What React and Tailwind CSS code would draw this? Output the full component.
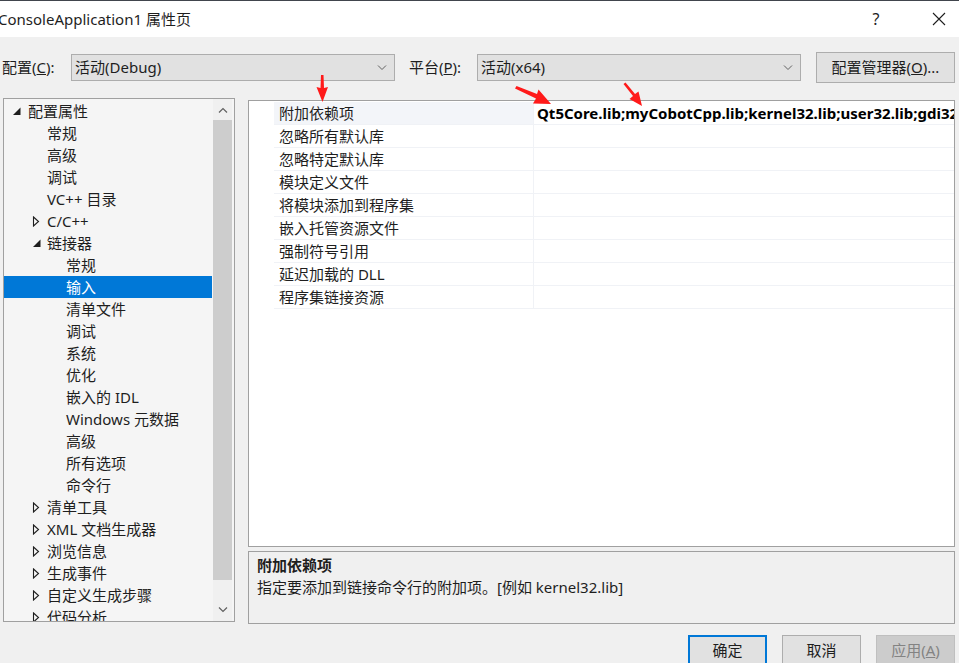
import React from "react";

const FONT = { fontFamily: '"Noto Sans", "Noto Sans CJK SC", sans-serif' };

const treeItems = [
  { t: "配置属性", l: 0, e: "open" },
  { t: "常规", l: 1 },
  { t: "高级", l: 1 },
  { t: "调试", l: 1 },
  { t: "VC++ 目录", l: 1 },
  { t: "C/C++", l: 1, e: "closed" },
  { t: "链接器", l: 1, e: "open" },
  { t: "常规", l: 2 },
  { t: "输入", l: 2, sel: true },
  { t: "清单文件", l: 2 },
  { t: "调试", l: 2 },
  { t: "系统", l: 2 },
  { t: "优化", l: 2 },
  { t: "嵌入的 IDL", l: 2 },
  { t: "Windows 元数据", l: 2 },
  { t: "高级", l: 2 },
  { t: "所有选项", l: 2 },
  { t: "命令行", l: 2 },
  { t: "清单工具", l: 1, e: "closed" },
  { t: "XML 文档生成器", l: 1, e: "closed" },
  { t: "浏览信息", l: 1, e: "closed" },
  { t: "生成事件", l: 1, e: "closed" },
  { t: "自定义生成步骤", l: 1, e: "closed" },
  { t: "代码分析", l: 1, e: "closed" },
];

const props = [
  "附加依赖项",
  "忽略所有默认库",
  "忽略特定默认库",
  "模块定义文件",
  "将模块添加到程序集",
  "嵌入托管资源文件",
  "强制符号引用",
  "延迟加载的 DLL",
  "程序集链接资源",
];

function Chevron() {
  return (
    <svg width="10" height="6" viewBox="0 0 10 6" className="shrink-0">
      <path d="M1 0.5 L5 4.5 L9 0.5" fill="none" stroke="#606060" strokeWidth="1" />
    </svg>
  );
}

function Expander({ kind, sel }) {
  const c = sel ? "#fff" : "#1e1e1e";
  if (kind === "open") {
    return (
      <svg width="9" height="10" viewBox="0 0 9 10" className="shrink-0">
        <polygon points="8.5,1.5 8.5,9 1,9" fill={c} />
      </svg>
    );
  }
  return (
    <svg width="8" height="11" viewBox="0 0 8 11" className="shrink-0">
      <polygon points="1.5,1 6.5,5.5 1.5,10" fill="none" stroke={c} strokeWidth="1.1" />
    </svg>
  );
}

function Combo({ text }) {
  return (
    <div className="w-[324px] h-[27px] bg-[#e1e1e1] border border-[#adadad] flex items-center justify-between pl-[3px] pr-[7px]">
      <span>{text}</span>
      <Chevron />
    </div>
  );
}

export default function App() {
  return (
    <div
      className="w-[959px] h-[663px] bg-[#f0f0f0] relative overflow-hidden text-[15px] text-[#1e1e1e]"
      style={FONT}
    >
      {/* title bar */}
      <div className="h-[37px] bg-white border-t border-[#41454d] flex items-center justify-between">
        <span className="-ml-[2px] leading-[20px]">ConsoleApplication1 属性页</span>
        <div className="flex items-center h-full">
          <span className="w-[20px] text-center mr-[46px] text-[16px]">?</span>
          <svg width="14" height="14" viewBox="0 0 14 14" className="mr-[13px]">
            <path d="M1 1 L13 13 M13 1 L1 13" stroke="#1e1e1e" strokeWidth="1.1" />
          </svg>
        </div>
      </div>

      {/* config row */}
      <div className="flex items-center h-[31px] mt-[15px]">
        <span className="ml-[2px] w-[69px]">
          配置(<span className="underline">C</span>):
        </span>
        <Combo text="活动(Debug)" />
        <span className="ml-[14px] w-[68px]">
          平台(<span className="underline">P</span>):
        </span>
        <Combo text="活动(x64)" />
        <div className="ml-[15px] w-[139px] h-[31px] bg-[#e1e1e1] border border-[#adadad] flex items-center justify-center">
          配置管理器(<span className="underline">O</span>)...
        </div>
      </div>

      {/* main */}
      <div className="flex mt-[15px] h-[526px]">
        {/* tree */}
        <div className="ml-[3px] w-[232px] h-[524px] border border-[#a0a0a0] bg-[#f5f5f5] flex overflow-hidden">
          <div className="w-[208px] pt-[1px] overflow-hidden">
            {treeItems.map((it, i) => (
              <div
                key={i}
                className={
                  "h-[22px] leading-[22px] flex items-center whitespace-nowrap " +
                  (it.sel ? "bg-[#0078d7] text-white" : "")
                }
              >
                <span
                  className={
                    "flex items-center justify-start shrink-0 " +
                    (it.l === 0 ? "w-[24px] pl-[8px]" : it.l === 1 ? "w-[43px] pl-[28px]" : "w-[62px]")
                  }
                >
                  {it.e ? <Expander kind={it.e} sel={it.sel} /> : null}
                </span>
                <span>{it.t}</span>
              </div>
            ))}
          </div>
          <div className="w-[19px] ml-[1px] bg-[#f0f0f0] flex flex-col items-center">
            <div className="h-[21px] flex items-center justify-center">
              <svg width="10" height="6" viewBox="0 0 10 6">
                <path d="M1 5.5 L5 1.5 L9 5.5" fill="none" stroke="#606060" strokeWidth="1.2" />
              </svg>
            </div>
            <div className="w-[19px] h-[460px] bg-[#cdcdcd]" />
            <div className="flex-1 flex items-end justify-center pb-[8px]">
              <svg width="10" height="6" viewBox="0 0 10 6">
                <path d="M1 0.5 L5 4.5 L9 0.5" fill="none" stroke="#606060" strokeWidth="1.2" />
              </svg>
            </div>
          </div>
        </div>

        {/* right column */}
        <div className="ml-[13px] w-[707px] flex flex-col pt-[2px]">
          <div className="h-[447px] bg-white border border-[#a0a0a0] pt-[1px] overflow-hidden">
            {props.map((p, i) => (
              <div key={i} className="flex h-[23px] leading-[22px] whitespace-nowrap">
                <div className="w-[25px] shrink-0" />
                <div
                  className={
                    "w-[260px] shrink-0 pl-[5px] border-b border-r border-[#f0f2f6] " +
                    (i === 0 ? "bg-[#f3f5f9]" : "")
                  }
                >
                  {p}
                </div>
                <div className="flex-1 pl-[3px] border-b border-[#f0f2f6] overflow-hidden font-bold text-black">
                  {i === 0 ? "Qt5Core.lib;myCobotCpp.lib;kernel32.lib;user32.lib;gdi32.lib;winspool.lib" : ""}
                </div>
              </div>
            ))}
          </div>
          <div className="mt-[4px] h-[73px] border border-[#a0a0a0] bg-[#f0f0f0] pl-[8px] pt-[2px]">
            <div className="font-bold leading-[22px]">附加依赖项</div>
            <div className="leading-[22px]">指定要添加到链接命令行的附加项。[例如 kernel32.lib]</div>
          </div>
        </div>
      </div>

      {/* buttons */}
      <div className="flex justify-end mt-[11px] mr-[4px] gap-[15px]">
        <div className="w-[79px] h-[31px] border-2 border-[#0078d7] bg-[#e1e1e1] flex items-center justify-center">
          确定
        </div>
        <div className="w-[79px] h-[31px] border border-[#adadad] bg-[#e1e1e1] flex items-center justify-center">
          取消
        </div>
        <div className="w-[79px] h-[31px] border border-[#bfbfbf] bg-[#cccccc] text-[#838383] flex items-center justify-center">
          应用(<span className="underline">A</span>)
        </div>
      </div>

      {/* red annotation arrows */}
      <svg className="absolute left-0 top-0 pointer-events-none" width="959" height="663">
        <polygon points="321,75 323.5,75 324,88 328,87 322.5,102 316.5,87 320.5,88" fill="#ff1a1a" />
        <polygon points="515,88.5 516.5,86 537,94 538.5,89.5 551,104 533,103.5 536,98.5" fill="#ff1a1a" />
        <polygon points="623.5,84 625.5,82.5 635,94 638.5,91.5 642,106 629.5,99 633,96" fill="#ff1a1a" />
      </svg>
    </div>
  );
}
